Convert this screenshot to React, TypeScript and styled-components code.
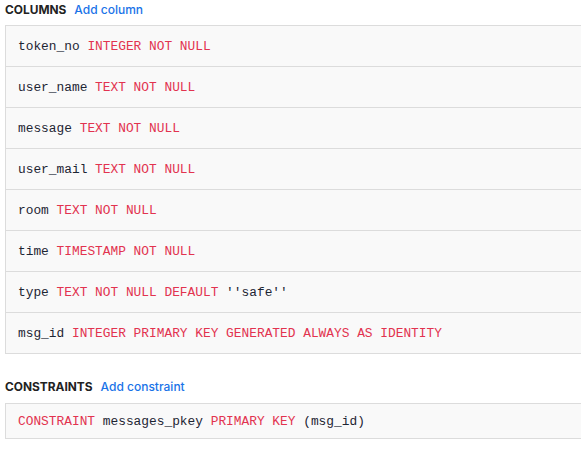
import React from "react";
import styled, { createGlobalStyle } from "styled-components";

const Global = createGlobalStyle`
  html, body { margin: 0; padding: 0; background: #fff; overflow: hidden; }
`;

const Page = styled.div`
  padding: 0 0 0 5px;
  width: 600px;
`;

const Section = styled.section<{ $gap: number }>`
  margin-top: ${(p) => p.$gap}px;
`;

const Heading = styled.div`
  display: flex;
  align-items: center;
  gap: 8px;
  height: 18px;
  font-family: Inter, "Liberation Sans", sans-serif;
  font-size: 11.9px;
`;

const Title = styled.span`
  font-weight: 700;
  color: #222;
`;

const AddLink = styled.a`
  color: #1a73e8;
  font-weight: 500;
  font-size: 12px;
  text-decoration: none;
  cursor: pointer;
`;

const Panel = styled.div<{ $top: number }>`
  margin-top: ${(p) => p.$top}px;
  border: 1px solid #dcdcdc;
  background: #f9f9f9;
  width: 600px;
`;

const Row = styled.div<{ $h: number }>`
  display: flex;
  align-items: center;
  height: ${(p) => p.$h}px;
  padding-left: 12px;
  font-family: "Liberation Mono", "DejaVu Sans Mono", monospace;
  font-size: 12.85px;
  color: #1d2533;
  white-space: pre;
  & + & {
    border-top: 1px solid #dcdcdc;
  }
`;

const Kw = styled.span`
  color: #e2334f;
`;

type Tok = { t: string; k?: boolean };

const columns: Tok[][] = [
  [{ t: "token_no " }, { t: "INTEGER NOT NULL", k: true }],
  [{ t: "user_name " }, { t: "TEXT NOT NULL", k: true }],
  [{ t: "message " }, { t: "TEXT NOT NULL", k: true }],
  [{ t: "user_mail " }, { t: "TEXT NOT NULL", k: true }],
  [{ t: "room " }, { t: "TEXT NOT NULL", k: true }],
  [{ t: "time " }, { t: "TIMESTAMP NOT NULL", k: true }],
  [{ t: "type " }, { t: "TEXT NOT NULL DEFAULT", k: true }, { t: " ''safe''" }],
  [{ t: "msg_id " }, { t: "INTEGER PRIMARY KEY GENERATED ALWAYS AS IDENTITY", k: true }],
];

const constraints: Tok[][] = [
  [
    { t: "CONSTRAINT", k: true },
    { t: " messages_pkey " },
    { t: "PRIMARY KEY", k: true },
    { t: " (msg_id)" },
  ],
];

const Line = ({ toks, h }: { toks: Tok[]; h: number }) => (
  <Row $h={h}>
    {toks.map((x, i) => (x.k ? <Kw key={i}>{x.t}</Kw> : <span key={i}>{x.t}</span>))}
  </Row>
);

export default function App() {
  return (
    <Page>
      <Global />
      <Section $gap={0}>
        <Heading>
          <Title>COLUMNS</Title>
          <AddLink>Add column</AddLink>
        </Heading>
        <Panel $top={7}>
          {columns.map((c, i) => (
            <Line key={i} toks={c} h={40} />
          ))}
        </Panel>
      </Section>
      <Section $gap={23}>
        <Heading>
          <Title>CONSTRAINTS</Title>
          <AddLink>Add constraint</AddLink>
        </Heading>
        <Panel $top={8}>
          {constraints.map((c, i) => (
            <Line key={i} toks={c} h={34} />
          ))}
        </Panel>
      </Section>
    </Page>
  );
}
